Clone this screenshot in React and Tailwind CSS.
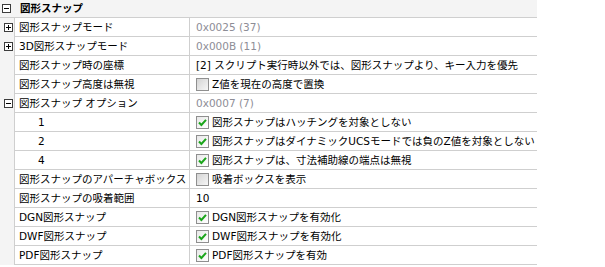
import React from "react";

const rows = [
  { label: "図形スナップモード", value: "0x0025 (37)", gray: true, expand: "plus" },
  { label: "3D図形スナップモード", value: "0x000B (11)", gray: true, expand: "plus" },
  { label: "図形スナップ時の座標", value: "[2] スクリプト実行時以外では、図形スナップより、キー入力を優先" },
  { label: "図形スナップ高度は無視", value: "Z値を現在の高度で置換", check: false },
  { label: "図形スナップ オプション", value: "0x0007 (7)", gray: true, expand: "minus" },
  { label: "1", sub: true, value: "図形スナップはハッチングを対象としない", check: true },
  { label: "2", sub: true, value: "図形スナップはダイナミックUCSモードでは負のZ値を対象としない", check: true },
  { label: "4", sub: true, value: "図形スナップは、寸法補助線の端点は無視", check: true },
  { label: "図形スナップのアパーチャボックス", value: "吸着ボックスを表示", check: false },
  { label: "図形スナップの吸着範囲", value: "10" },
  { label: "DGN図形スナップ", value: "DGN図形スナップを有効化", check: true },
  { label: "DWF図形スナップ", value: "DWF図形スナップを有効化", check: true },
  { label: "PDF図形スナップ", value: "PDF図形スナップを有効", check: true },
];

function Expander({ kind }) {
  return (
    <span className="w-[9px] h-[9px] border border-[#3c3c3c] bg-white flex items-center justify-center relative">
      <span className="absolute w-[5px] h-px bg-black" />
      {kind === "plus" && <span className="absolute h-[5px] w-px bg-black" />}
    </span>
  );
}

function Checkbox({ checked }) {
  return (
    <span
      className={
        checked
          ? "w-[13px] h-[13px] border border-[#8f8f8f] bg-gradient-to-br from-[#e8e8e8] to-white flex items-center justify-center shrink-0"
          : "w-[13px] h-[13px] border border-[#8f8f8f] bg-gradient-to-br from-[#d4d4d4] to-[#f6f6f6] shrink-0"
      }
    >
      {checked && (
        <svg width="9" height="9" viewBox="0 0 9 9">
          <path d="M1 4.5 L3.4 7 L8 1.8" fill="none" stroke="#1aa51a" strokeWidth="2" />
        </svg>
      )}
    </span>
  );
}

export default function App() {
  return (
    <div
      className="w-[605px] h-[267px] bg-white overflow-hidden text-[10.5px] text-black leading-none"
      style={{ fontFamily: '"DejaVu Sans", "Noto Sans CJK JP", sans-serif' }}
    >
      <div className="w-[537px]">
        <div className="h-[18px] flex items-center bg-[#f4f4f4] border-b border-[#cfcfcf]">
          <span className="w-[14px] pl-[2px] flex items-center">
            <Expander kind="minus" />
          </span>
          <span className="pl-[6px] font-bold">図形スナップ</span>
        </div>
        {rows.map((r, i) => (
          <div key={i} className="flex h-[19px]">
            <div className="w-[14px] shrink-0 bg-[#f4f4f4] flex items-center pl-[4px]">
              {r.expand && <Expander kind={r.expand} />}
            </div>
            <div
              className={
                "w-[175px] shrink-0 border-l border-b border-[#cfcfcf] flex items-center whitespace-nowrap overflow-hidden " +
                (r.sub ? "pl-[23px]" : "pl-[4px]")
              }
            >
              {r.label}
            </div>
            <div className="flex-1 min-w-0 border-l border-b border-[#cfcfcf] flex items-center pl-[6px] whitespace-nowrap overflow-hidden">
              {r.check !== undefined && <Checkbox checked={r.check} />}
              <span className={(r.gray ? "text-[#8d8d96] " : "") + (r.check !== undefined ? "pl-[3px]" : "")}>
                {r.value}
              </span>
            </div>
          </div>
        ))}
      </div>
    </div>
  );
}
